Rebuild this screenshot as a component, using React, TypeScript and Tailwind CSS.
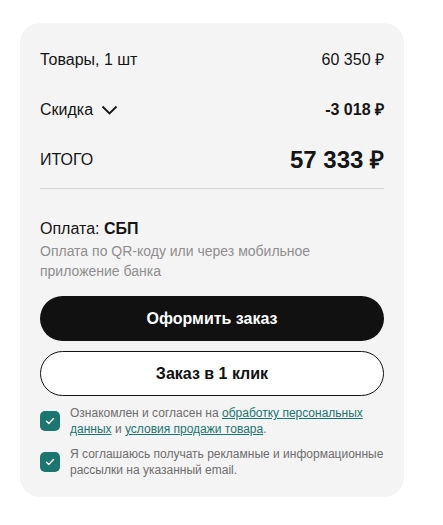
import React from 'react'

const font = { fontFamily: '"Liberation Sans", Arial, sans-serif' }

function Check() {
  return (
    <span className="flex h-5 w-5 shrink-0 items-center justify-center rounded-[5px] bg-[#1b7670]">
      <svg width="12" height="12" viewBox="0 0 12 12" fill="none">
        <path d="M2.5 6.2l2.3 2.3 4.7-4.9" stroke="white" strokeWidth="1.4" strokeLinecap="round" strokeLinejoin="round" />
      </svg>
    </span>
  )
}

export default function App() {
  return (
    <div className="min-h-[525px] w-[443px] bg-white pt-[23px] pl-5" style={font}>
      <div className="w-[384px] rounded-[20px] bg-[#f4f4f4] px-5 pt-3 pb-[19px] text-[#151515]">
        <div className="flex h-[50px] items-center justify-between text-[16px]">
          <span>Товары, 1 шт</span>
          <span>60 350 ₽</span>
        </div>
        <div className="flex h-[50px] items-center justify-between text-[16px]">
          <span className="flex items-center gap-[8px]">
            Скидка
            <svg width="17" height="10" viewBox="0 0 17 10" fill="none">
              <path d="M1.5 1.5l7 7 7-7" stroke="#151515" strokeWidth="1.8" />
            </svg>
          </span>
          <span className="font-bold">-3 018 ₽</span>
        </div>
        <div className="flex h-[50px] items-center justify-between">
          <span className="text-[16px]">ИТОГО</span>
          <span className="text-[24px] font-bold">57 333 ₽</span>
        </div>
        <div className="mt-[3px] h-px bg-[#d6d6d6]" />
        <div className="mt-[30px] text-[16px] leading-5">
          Оплата: <span className="font-bold">СБП</span>
        </div>
        <p className="mt-[2px] text-[14px] leading-5 text-[#8e8e8e]">
          Оплата по QR-коду или через мобильное приложение банка
        </p>
        <button className="mt-[15px] flex h-[45px] w-full items-center justify-center rounded-full bg-[#111111] text-[16px] font-bold text-white">
          Оформить заказ
        </button>
        <button className="mt-[10px] flex h-[45px] w-full items-center justify-center rounded-full border border-[#111111] bg-white text-[16px] font-bold text-[#111111]">
          Заказ в 1 клик
        </button>
        <div className="mt-[9px] flex items-center gap-[10px]">
          <Check />
          <p className="text-[12px] leading-[16px] text-[#6e6e6e]">
            Ознакомлен и согласен на{' '}
            <a href="#" className="text-[#1b7670] underline">обработку персональных данных</a> и{' '}
            <a href="#" className="text-[#1b7670] underline">условия продажи товара</a>.
          </p>
        </div>
        <div className="mt-[9px] flex items-center gap-[10px]">
          <Check />
          <p className="text-[12px] leading-[16px] text-[#6e6e6e]">
            Я соглашаюсь получать рекламные и информационные рассылки на указанный email.
          </p>
        </div>
      </div>
    </div>
  )
}
